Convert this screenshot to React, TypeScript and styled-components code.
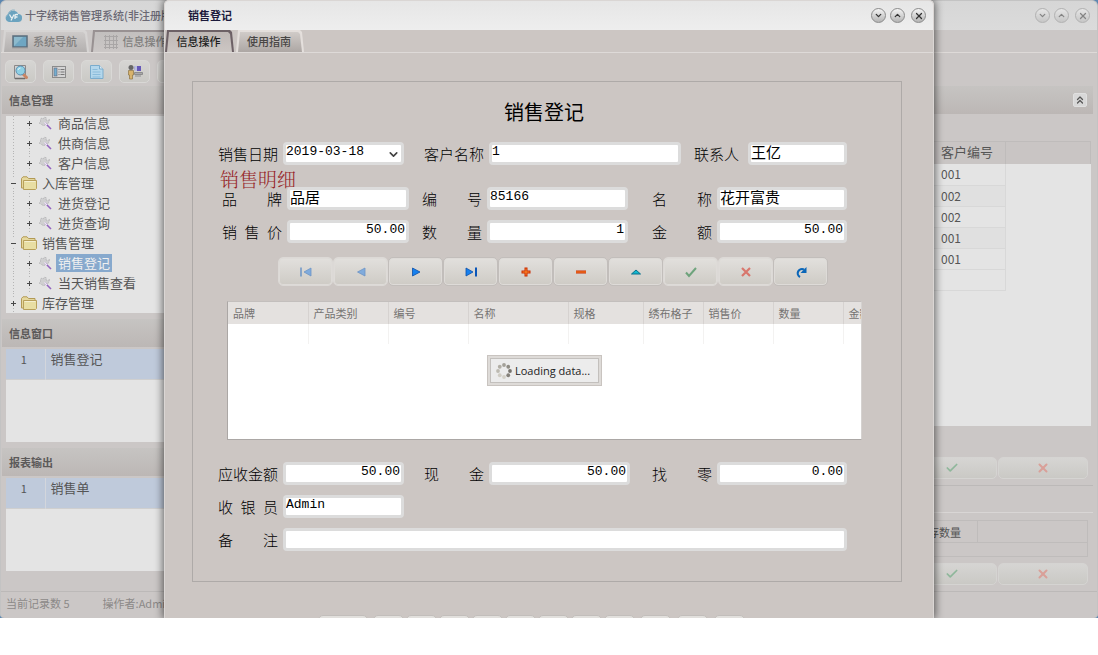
import React from "react";
import styled, { createGlobalStyle, css } from "styled-components";
import { Check, ChevronDown, ChevronsUp, ChevronUp, X } from "lucide-react";

const sans = `"Noto Sans CJK SC", sans-serif`;
const latin = `"Open Sans", "Noto Sans CJK SC", sans-serif`;
const mono = `"Liberation Mono", "Noto Sans CJK SC", monospace`;

const Global = createGlobalStyle`
  * { box-sizing: border-box; }
  body { margin: 0; background: #fff; font-family: ${sans}; font-size: 11px; color: #555; }
  button, input, select { font: inherit; color: inherit; margin: 0; }
  button { padding: 0; }
  ul { list-style: none; margin: 0; padding: 0; }
  h1, h2, h3, p { margin: 0; font-weight: 400; }
  table { border-collapse: collapse; border-spacing: 0; }
  svg { display: block; }
`;

/* ---------- shared window chrome ---------- */

const Desktop = styled.div`
  position: relative;
  height: calc(100vh - 37px);
  background: #5d87b0;
`;

const AppWindow = styled.div`
  height: 100%;
  display: flex;
  flex-direction: column;
  overflow: hidden;
  background: #cbc7c6;
  border: 1px solid #c3c3c3;
  border-width: 1px 1px 0 1px;
  border-radius: 6px 6px 4px 4px;
`;

const TitleBar = styled.header<{ $front?: boolean }>`
  flex: none;
  display: flex;
  align-items: center;
  gap: 3px;
  height: 29px;
  padding: 0 7px 0 ${(p) => (p.$front ? 23 : 4)}px;
  background: ${(p) =>
    p.$front ? "linear-gradient(#e6e6e6, #eeeeee)" : "linear-gradient(#d6d6d6, #dbdbdb)"};
`;

const WindowTitle = styled.h1<{ $front?: boolean }>`
  flex: 1;
  font-size: 11px;
  line-height: 29px;
  font-weight: ${(p) => (p.$front ? 700 : 500)};
  color: ${(p) => (p.$front ? "#1c1a3c" : "#6a6874")};
  white-space: nowrap;
`;

const Controls = styled.div<{ $dim?: boolean }>`
  display: flex;
  gap: 4px;
  opacity: ${(p) => (p.$dim ? 0.5 : 1)};
`;

const RoundButton = styled.button<{ $last?: boolean }>`
  width: 15px;
  height: 15px;
  display: grid;
  place-items: center;
  border: 1px solid #8b8b8b;
  border-radius: 50%;
  background: linear-gradient(#f4f4f4, #b4b4b4);
  color: #333;
  margin-left: ${(p) => (p.$last ? 2 : 0)}px;
`;

const TabStrip = styled.nav<{ $front?: boolean }>`
  flex: none;
  display: flex;
  align-items: flex-end;
  gap: 2px;
  height: 23px;
  padding-left: ${(p) => (p.$front ? 0 : 1)}px;
  border-bottom: 1px solid #dedad8;
`;

const TabButton = styled.button<{ $active?: boolean; $w: number; $dim?: boolean }>`
  position: relative;
  isolation: isolate;
  display: flex;
  align-items: center;
  justify-content: center;
  gap: 5px;
  width: ${(p) => p.$w}px;
  height: 22px;
  border: 0;
  padding: 1px 2px 0 0;
  background: none;
  font-size: 11px;
  font-weight: 500;
  line-height: 21px;
  white-space: nowrap;
  color: ${(p) => (p.$dim ? "#807e7d" : p.$active ? "#1d1d1d" : "#484645")};
  &::before,
  &::after {
    content: "";
    position: absolute;
    z-index: -1;
    clip-path: polygon(2px 0, calc(100% - 4px) 0, calc(100% - 2px) 2px, 100% 100%, 0 100%);
  }
  &::before {
    inset: 0;
    background: ${(p) =>
      p.$active ? (p.$dim ? "#989192" : "#6d6166") : p.$dim ? "#d6d4d3" : "#e4dfdc"};
  }
  &::after {
    inset: 2px 2px 0 2px;
    background: ${(p) =>
      p.$active
        ? p.$dim
          ? "linear-gradient(#c2bfbe, #cbc7c6)"
          : "linear-gradient(#bfb8b6, #ccc6c3)"
        : p.$dim
          ? "linear-gradient(#cdcac9, #b3b0af)"
          : "linear-gradient(#d0cbc8, #ada7a4)"};
  }
`;

const softButton = css`
  border: 1px solid #d9d8d6;
  border-radius: 5px;
  background: linear-gradient(#d6d5d3, #cac9c5);
`;

/* ---------- background window ---------- */

const Toolbar = styled.div`
  flex: none;
  display: flex;
  align-items: center;
  gap: 7px;
  height: 33px;
  padding: 4px 4px 0;
`;

const ToolButton = styled.button`
  ${softButton}
  width: 31px;
  height: 23px;
  display: grid;
  place-items: center;
`;

const Columns = styled.div`
  flex: 1;
  min-height: 0;
  display: flex;
`;

const Sidebar = styled.aside`
  flex: none;
  width: 220px;
  padding-left: 1px;
  border-right: 1px solid #bfbcbb;
`;

const Main = styled.main`
  flex: 1;
  min-width: 0;
  padding-right: 4px;
`;

const PanelHeader = styled.h2`
  display: flex;
  align-items: center;
  justify-content: space-between;
  height: 28px;
  padding: 0 6px 0 7px;
  font-size: 11px;
  font-weight: 700;
  color: #5b5959;
  background: linear-gradient(#c6c4c2, #bcb7b5);
`;

const CollapseButton = styled.button`
  width: 14px;
  height: 14px;
  display: grid;
  place-items: center;
  border: 1px solid #e0e0e0;
  border-radius: 2px;
  background: #d8d8d8;
  color: #555;
`;

const Pane = styled.div<{ $h: number }>`
  height: ${(p) => p.$h}px;
  margin: 2px 0 6px 4px;
  overflow: hidden;
  background: #e4e4e4;
`;

const Tree = styled.ul`
  margin-top: -3px;
`;

const TreeRow = styled.li`
  display: flex;
  align-items: center;
  height: 20px;
`;

const Guide = styled.span<{ $w: number }>`
  flex: none;
  width: ${(p) => p.$w}px;
  height: 20px;
  display: grid;
  place-items: center;
  background: repeating-linear-gradient(#b5b5b5 0 1px, transparent 1px 3px) center / 1px 100% no-repeat;
`;

const Sign = styled.span`
  width: 9px;
  height: 9px;
  background: #e4e4e4;
`;

const TreeText = styled.a<{ $selected?: boolean }>`
  margin-left: 3px;
  padding: 0 2px;
  font-size: 13px;
  line-height: 18px;
  text-decoration: none;
  white-space: nowrap;
  color: ${(p) => (p.$selected ? "#f0f0f0" : "#565656")};
  background: ${(p) => (p.$selected ? "#87a9cd" : "transparent")};
`;

const ListTable = styled.table`
  width: 100%;
  table-layout: fixed;
  tr {
    height: 30px;
    background: #bfcadb;
    border-bottom: 1px solid #cfcfcf;
  }
  td {
    padding: 0 0 9px 5px;
    font-size: 13px;
    line-height: 20px;
  }
  td:first-child {
    width: 39px;
    padding-left: 0;
    padding-right: 3px;
    text-align: center;
    font-size: 11px;
    border-right: 1px solid #d3d6dc;
  }
`;

const StatusBar = styled.footer`
  flex: none;
  display: flex;
  gap: 33px;
  height: 27px;
  padding-left: 5px;
  line-height: 22px;
  color: #8b8988;
  border-top: 1px solid #bcb9b8;
`;

const CustomerPane = styled.div`
  height: 285px;
  margin: 27px 2px 0 0;
  background: #e4e4e4;
`;

const CustomerTable = styled.table`
  width: 100%;
  table-layout: fixed;
  font-size: 12px;
  th {
    height: 22px;
    padding: 0 0 2px 8px;
    text-align: left;
    font-size: 13px;
    font-weight: 400;
    line-height: 20px;
    background: #c9c5c4;
    border: 1px solid #bfbcbb;
    border-bottom: 0;
  }
  td {
    height: 21px;
    padding: 0 0 1px 8px;
    line-height: 19px;
    border: solid #d8d8d8;
    border-width: 0 1px 1px 0;
  }
  td:last-child {
    border: 0;
  }
  tr:nth-child(even):not(:last-child) td:not(:last-child) {
    background: #e0e0e0;
  }
`;

const ActionBar = styled.div<{ $top: number }>`
  display: flex;
  justify-content: flex-end;
  gap: 1px;
  margin-top: ${(p) => p.$top}px;
  padding-right: 5px;
`;

const ActionButton = styled.button`
  ${softButton}
  border-color: #d5d4d2;
  width: 90px;
  height: 22px;
  display: grid;
  place-items: center;
`;

const Divider = styled.hr<{ $light?: boolean; $top: number }>`
  height: 1px;
  margin: ${(p) => p.$top}px 0 0;
  border: 0;
  background: ${(p) => (p.$light ? "#d9d6d5" : "#bcb9b8")};
`;

const StockTable = styled.table`
  width: calc(100% - 5px);
  margin-top: 7px;
  table-layout: fixed;
  th,
  td {
    border: 1px solid #bfbcbb;
    padding: 0 16px 0 0;
  }
  th {
    height: 22px;
    text-align: right;
    font-weight: 400;
    font-size: 11px;
    line-height: 20px;
  }
  td {
    height: 14px;
    border-width: 1px 0;
  }
  td:last-child {
    border-right-width: 1px;
  }
`;

/* ---------- sales dialog ---------- */

const Dialog = styled.section`
  position: absolute;
  inset: 0;
  margin: 0 auto;
  width: 770px;
  max-width: 100%;
  height: 100%;
  overflow: hidden;
  background: #ccc6c3;
  border: 1px solid #dad6d4;
  border-bottom: 0;
  border-radius: 5px 5px 0 0;
`;

const DialogShade = styled.div`
  position: absolute;
  inset: 0;
  margin: 0 auto;
  width: 770px;
  max-width: 100%;
  border-radius: 5px 5px 0 0;
  box-shadow: 0 0 8px 1px rgba(0, 0, 0, 0.6);
`;

const Clip = styled.div`
  position: absolute;
  inset: 0;
  overflow: hidden;
`;

const FormFrame = styled.form`
  margin: 28px 31px 0 27px;
  padding: 15px 0 30px 25px;
  border: 1px solid #aeaaa8;
  color: #000;
`;

const FormTitle = styled.h2`
  margin: 0 31px 15px 0;
  text-align: center;
  font-size: 20px;
  line-height: 30px;
`;

const DetailTitle = styled.h3`
  height: 22px;
  margin-left: 2px;
  font-family: "Noto Serif CJK SC", "Noto Sans CJK SC", serif;
  font-size: 19px;
  font-weight: 300;
  line-height: 28px;
  color: #962427;
`;

const FieldRow = styled.div<{ $cols: string; $top?: number; $indent?: number }>`
  display: grid;
  grid-template-columns: ${(p) => p.$cols};
  column-gap: 13px;
  margin: ${(p) => p.$top ?? 0}px 54px 0 ${(p) => p.$indent ?? 0}px;
`;

const FieldBox = styled.div`
  display: flex;
  align-items: center;
  gap: 5px;
`;

const FieldLabel = styled.label<{ $w: number }>`
  flex: none;
  width: ${(p) => p.$w}px;
  font-size: 15px;
  font-weight: 300;
  line-height: 23px;
  white-space: nowrap;
  text-align-last: ${(p) => (p.$w === 60 ? "justify" : "left")};
`;

const fieldLook = css<{ $w?: number; $right?: boolean; $large?: boolean }>`
  ${(p) => (p.$w ? `width: ${p.$w}px;` : "flex: 1; width: 0;")}
  height: 23px;
  min-width: 0;
  padding: 0 1px 4px 0;
  border: 3px solid #dcdcdc;
  border-radius: 4px;
  outline: 0;
  background: #fff;
  font-family: ${(p) => (p.$large ? sans : mono)};
  font-size: ${(p) => (p.$large ? 15 : 13)}px;
  line-height: 13px;
  text-align: ${(p) => (p.$right ? "right" : "left")};
`;

const TextInput = styled.input`
  ${fieldLook}
`;

const DateWrap = styled.span`
  position: relative;
  display: flex;
  svg {
    position: absolute;
    right: 4px;
    top: 6px;
    pointer-events: none;
  }
`;

const DateSelect = styled.select`
  ${fieldLook}
  appearance: none;
`;

const NavBar = styled.div`
  display: flex;
  margin: 14px 0 15px 60px;
`;

const NavButton = styled.button<{ $off?: boolean }>`
  width: 55px;
  height: 29px;
  display: grid;
  place-items: center;
  border: 1px solid ${(p) => (p.$off ? "#dcd9d6" : "#c2bebb")};
  border-radius: 5px;
  background: linear-gradient(#e2e0dd, #cecbc5);
  box-shadow: inset 0 0 0 1px #dedbd8;
  svg {
    opacity: ${(p) => (p.$off ? 0.55 : 1)};
  }
`;

const GridBox = styled.div`
  position: relative;
  height: 139px;
  margin: 0 39px 22px 9px;
  overflow: hidden;
  background: #fff;
  border: 1px solid #aba7a5;
  border-top-color: #c3bfbd;
  border-right-color: #d5d2d0;
`;

const DetailTable = styled.table`
  width: 100%;
  table-layout: fixed;
  th {
    height: 22px;
    padding: 0 0 0 5px;
    overflow: hidden;
    text-align: left;
    font-size: 11px;
    font-weight: 400;
    line-height: 21px;
    white-space: nowrap;
    color: #757372;
    background: #e4e1df;
    border-right: 1px solid #d6d2d0;
  }
  td {
    height: 20px;
    padding: 0;
    border-right: 1px solid #f3f2f1;
  }
  th:last-child,
  td:last-child {
    border-right: 0;
  }
`;

const LoadingBox = styled.div`
  position: absolute;
  left: 0;
  right: 0;
  top: 53px;
  width: 115px;
  margin: 0 auto;
  padding: 2px;
  border: 1px solid #c9c4c0;
  background: #dedbd8;
`;

const LoadingText = styled.p`
  display: flex;
  align-items: center;
  gap: 3px;
  height: 25px;
  padding-left: 5px;
  border: 1px solid #c3c0bd;
  background: #ececec;
  font-family: ${latin};
  font-size: 11px;
  white-space: nowrap;
  color: #222;
`;

const BottomBar = styled.div`
  display: flex;
  gap: 5px;
  margin: 33px 0 0 153px;
`;

const ButtonGroup = styled.div<{ $gap: number }>`
  display: flex;
  gap: ${(p) => p.$gap}px;
`;

const BottomButton = styled.button<{ $w?: number }>`
  width: ${(p) => p.$w ?? 31}px;
  height: 29px;
  border: 1px solid #c2bebb;
  border-radius: 5px;
  background: #e2e0dd;
`;

/* ---------- drawings ---------- */

const Logo = () => (
  <svg width="17" height="14" viewBox="0 0 17 14">
    <path d="M4 13a4 4 0 0 1-1-7.600A5.500 5.500 0 0 1 13.200 5 4 4 0 0 1 13 13z" fill="#6ba3bf" />
    <path d="M1 8a4 4 0 0 1 2-2.600A5.500 5.500 0 0 1 10 1.200" fill="none" stroke="#8fb4c6" />
    <path d="M4.500 5.500l2 3.500m2.500-3.500L6 11.500M10 10V6.500q0-1 1-1h2M10 8h2.500" fill="none" stroke="#e8f0f2" strokeWidth="1.300" />
  </svg>
);

const MonitorIcon = () => (
  <svg width="16" height="14" viewBox="0 0 16 14">
    <rect x="1" y="1" width="14" height="11" fill="#6fa6c2" stroke="#5b6d7c" strokeWidth="1.500" />
    <path d="M2 11V2h9z" fill="#8dbacd" />
    <path d="M0 13h16" stroke="#a4a09e" />
  </svg>
);

const MeshIcon = () => (
  <svg width="14" height="14" viewBox="0 0 14 14" stroke="#a9a6a6" shapeRendering="crispEdges">
    <path d="M0 1.500h14M0 5.500h14M0 9.500h14M0 12.500h14M1.500 0v14M5.500 0v14M9.500 0v14M12.500 0v14" />
  </svg>
);

const SearchDocIcon = () => (
  <svg width="16" height="16" viewBox="0 0 16 16">
    <path d="M1.500 1.500h11v13h-11z" fill="#d3d1d0" stroke="#8a8888" />
    <path d="M9.500 9.500l4 4" stroke="#c98563" strokeWidth="3" strokeLinecap="round" />
    <circle cx="7.500" cy="6.500" r="4.500" fill="#8fd0e4" stroke="#5c91b3" />
    <path d="M5 6a2.500 2.500 0 0 1 2.500-2" fill="none" stroke="#e9f6fa" />
    <path d="M2 14.500h10" stroke="#6d6b6b" strokeWidth="1.500" />
  </svg>
);

const FormIcon = () => (
  <svg width="14" height="12" viewBox="0 0 14 12">
    <rect x=".5" y=".5" width="13" height="11" fill="#d4d4d4" stroke="#8b8b8b" />
    <rect x="2" y="2" width="3" height="8" fill="#73aed0" stroke="#667" strokeWidth=".6" />
    <path d="M6.500 3.500h1m1 0h4M6.500 6h1m1 0h4M6.500 8.500h1m1 0h4" stroke="#777" />
  </svg>
);

const PageIcon = () => (
  <svg width="14" height="16" viewBox="0 0 14 16">
    <path d="M.5 1.500h9l3.500 3.500v9.500H.5z" fill="#b4d7ec" stroke="#7aaccd" />
    <path d="M9.500 1.500v3.500H13" fill="#dbeaf2" stroke="#7aaccd" />
    <path d="M2.500 5.500h5m-5 2.500h8m-8 2.500h8m-8 2.500h8" stroke="#8bbcdb" />
  </svg>
);

const ClerkIcon = () => (
  <svg width="16" height="16" viewBox="0 0 16 16">
    <path d="M7 2h7v5H8z" fill="#6558b8" />
    <path d="M7 2h3v5H8z" fill="#b9bfe0" />
    <path d="M7.500 8.500h8v2h-8zM8 12h6" fill="#aaa" stroke="#8d8d8d" />
    <circle cx="4" cy="3.500" r="2.500" fill="#666" />
    <path d="M1.500 6.500h5v4.500h-1v4h-3v-4h-1z" fill="#d8b36c" stroke="#8d7443" strokeWidth=".7" />
  </svg>
);

const WandIcon = () => (
  <svg width="16" height="16" viewBox="0 0 16 16">
    <path d="M3.500 4l1.500-1 1 1 1.500-2 2 1-.5 2 1.500 1 2-2-.5 3-1.500 2-2-1-1.500 3-2.500-1.500L2 8l1.500-1.500z" fill="#cfcfd0" stroke="#aeaeb0" strokeWidth=".7" strokeDasharray="2 1" />
    <path d="M8 8l6 6" stroke="#9465bf" strokeWidth="1.600" />
    <path d="M7.500 7.500l2.500 2.500" stroke="#efeaf4" strokeWidth="1.300" />
  </svg>
);

const FolderIcon = () => (
  <svg width="16" height="14" viewBox="0 0 16 14">
    <path d="M.5 12V2.500L2 .8h4l1.500 1.700H14v9.500z" fill="#e5d79d" stroke="#b29a55" />
    <path d="M2.500 4.500h13v8l-1 1H2.500z" fill="#e8dea3" stroke="#b8a05b" />
    <path d="M3.500 5.500h11" stroke="#f4efcf" />
  </svg>
);

const SignIcon = ({ open }: { open: boolean }) => (
  <svg width="9" height="9" viewBox="0 0 9 9" stroke="#484848">
    <path d={open ? "M2 4.500h5" : "M2 4.500h5M4.500 2v5"} />
  </svg>
);

const Spinner = () => {
  const shades = ["#77736c", "#86827b", "#d3d0c7", "#d0cdc4", "#bdbab1", "#b0ada4", "#a3a098", "#8f8c84"];
  return (
    <svg width="16" height="16" viewBox="-8 -8 16 16">
      {shades.map((fill, i) => (
        <circle key={i} r="1.900" cx={6 * Math.cos((i * Math.PI) / 4)} cy={6 * Math.sin((i * Math.PI) / 4)} fill={fill} />
      ))}
    </svg>
  );
};

const navIcons: { name: string; off?: boolean; art: React.ReactNode }[] = [
  { name: "第一条", off: true, art: <><path d="M1 1.500v9" stroke="#1560bd" strokeWidth="1.500" /><path d="M11 2v8L4 6z" fill="#3a8ae6" stroke="#1560bd" strokeWidth=".8" /></> },
  { name: "上一条", off: true, art: <path d="M10 2v8L2.500 6z" fill="#3a8ae6" stroke="#1560bd" strokeWidth=".8" /> },
  { name: "下一条", art: <path d="M2.500 2v8L10 6z" fill="#1680ee" stroke="#0b4fa8" strokeWidth=".8" /> },
  { name: "最后一条", art: <><path d="M11 1.500v9" stroke="#0b56b8" strokeWidth="2" /><path d="M1 2v8l7-4z" fill="#1680ee" stroke="#0b4fa8" strokeWidth=".8" /></> },
  { name: "添加", art: <><path d="M6 1.500v9M1.500 6h9" stroke="#c92b00" strokeWidth="3" /><path d="M6 2.500v7M2.500 6h7" stroke="#ff8a2a" /></> },
  { name: "删除", art: <><path d="M1 6h10" stroke="#c92b00" strokeWidth="3" /><path d="M1 6h10" stroke="#ff8a2a" /></> },
  { name: "编辑", art: <path d="M1.500 8L6 4l4.500 4z" fill="#12b8cf" stroke="#08718c" /> },
  { name: "保存", off: true, art: <path d="M1 6.500l3 3.500 7-8" fill="none" stroke="#197c38" strokeWidth="2" /> },
  { name: "取消", off: true, art: <path d="M2 2l8 8M10 2l-8 8" stroke="#d92a1c" strokeWidth="2.200" /> },
  { name: "刷新", art: <><path d="M5 11A4 4 0 1 1 9 3.500" fill="none" stroke="#0a66b8" strokeWidth="2.200" /><path d="M11.500 1v6H5.500z" fill="#0a66b8" /></> },
];

/* ---------- pieces ---------- */

const WindowControls = ({ dim }: { dim?: boolean }) => (
  <Controls $dim={dim}>
    <RoundButton aria-label="最小化"><ChevronDown size={9} strokeWidth={3.5} /></RoundButton>
    <RoundButton aria-label="最大化"><ChevronUp size={9} strokeWidth={3.5} /></RoundButton>
    <RoundButton aria-label="关闭" $last><X size={10} strokeWidth={3} /></RoundButton>
  </Controls>
);

type FieldProps = { id: string; label: string; value: string; w?: number; labelWidth?: number; right?: boolean; large?: boolean };

const Field = ({ id, label, value, w, labelWidth = 60, right, large }: FieldProps) => (
  <FieldBox>
    <FieldLabel htmlFor={id} $w={labelWidth}>{label}</FieldLabel>
    <TextInput id={id} defaultValue={value} $w={w} $right={right} $large={large} />
  </FieldBox>
);

const tree: { text: string; level: 1 | 2; open?: boolean; selected?: boolean }[] = [
  { text: "商品信息", level: 2 },
  { text: "供商信息", level: 2 },
  { text: "客户信息", level: 2 },
  { text: "入库管理", level: 1, open: true },
  { text: "进货登记", level: 2 },
  { text: "进货查询", level: 2 },
  { text: "销售管理", level: 1, open: true },
  { text: "销售登记", level: 2, selected: true },
  { text: "当天销售查看", level: 2 },
  { text: "库存管理", level: 1 },
];

const detailColumns: [string, number | undefined][] = [
  ["品牌", 80], ["产品类别", 80], ["编号", 80], ["名称", 100], ["规格", 75],
  ["绣布格子", 60], ["销售价", 70], ["数量", 70], ["金额", undefined],
];

const ConfirmButtons = ({ top }: { top: number }) => (
  <ActionBar $top={top}>
    <ActionButton aria-label="保存"><Check size={14} strokeWidth={3} color="#8fb79b" /></ActionButton>
    <ActionButton aria-label="取消"><X size={14} strokeWidth={3.5} color="#d9a099" /></ActionButton>
  </ActionBar>
);

const IndexList = ({ text }: { text: string }) => (
  <ListTable><tbody><tr><td>1</td><td>{text}</td></tr></tbody></ListTable>
);

function MainWindow() {
  return (
    <AppWindow>
      <TitleBar>
        <Logo />
        <WindowTitle>十字绣销售管理系统(非注册版)</WindowTitle>
        <WindowControls dim />
      </TitleBar>
      <TabStrip>
        <TabButton $w={87} $dim><MonitorIcon />系统导航</TabButton>
        <TabButton $w={90} $dim $active><MeshIcon />信息操作</TabButton>
      </TabStrip>
      <Toolbar>
        <ToolButton aria-label="查找"><SearchDocIcon /></ToolButton>
        <ToolButton aria-label="表单"><FormIcon /></ToolButton>
        <ToolButton aria-label="文档"><PageIcon /></ToolButton>
        <ToolButton aria-label="操作员"><ClerkIcon /></ToolButton>
        <ToolButton aria-label="窗口"><FormIcon /></ToolButton>
      </Toolbar>
      <Columns>
        <Sidebar>
          <PanelHeader>信息管理</PanelHeader>
          <Pane $h={197}>
            <Tree>
              {tree.map((n) => (
                <TreeRow key={n.text}>
                  <Guide $w={15}>{n.level === 1 && <Sign><SignIcon open={!!n.open} /></Sign>}</Guide>
                  {n.level === 2 && <Guide $w={16}><Sign><SignIcon open={false} /></Sign></Guide>}
                  {n.level === 1 ? <FolderIcon /> : <WandIcon />}
                  <TreeText href="#" $selected={n.selected}>{n.text}</TreeText>
                </TreeRow>
              ))}
            </Tree>
          </Pane>
          <PanelHeader>信息窗口</PanelHeader>
          <Pane $h={93}><IndexList text="销售登记" /></Pane>
          <PanelHeader>报表输出</PanelHeader>
          <Pane $h={93}><IndexList text="销售单" /></Pane>
        </Sidebar>
        <Main>
          <PanelHeader as="div">
            <span />
            <CollapseButton aria-label="折叠"><ChevronsUp size={12} strokeWidth={2.5} /></CollapseButton>
          </PanelHeader>
          <CustomerPane>
            <CustomerTable>
              <colgroup><col /><col width="73" /><col width="85" /></colgroup>
              <thead><tr><th /><th>客户编号</th><th /></tr></thead>
              <tbody>
                {["001", "002", "002", "001", "001", ""].map((v, i) => (
                  <tr key={i}><td /><td>{v}</td><td /></tr>
                ))}
              </tbody>
            </CustomerTable>
          </CustomerPane>
          <ConfirmButtons top={31} />
          <Divider $top={6} />
          <Divider $top={26} $light />
          <StockTable>
            <colgroup><col /><col width="110" /></colgroup>
            <thead><tr><th>库存数量</th><th /></tr></thead>
            <tbody><tr><td /><td /></tr></tbody>
          </StockTable>
          <ConfirmButtons top={6} />
        </Main>
      </Columns>
      <StatusBar><span>当前记录数 5</span><span>操作者:Admin</span></StatusBar>
    </AppWindow>
  );
}

function SalesDialog() {
  return (
    <Dialog>
      <TitleBar $front>
        <WindowTitle $front as="h2">销售登记</WindowTitle>
        <WindowControls />
      </TitleBar>
      <TabStrip $front>
        <TabButton $w={69} $active>信息操作</TabButton>
        <TabButton $w={68}>使用指南</TabButton>
      </TabStrip>
      <FormFrame onSubmit={(e) => e.preventDefault()}>
        <FormTitle>销售登记</FormTitle>
        <FieldRow $cols="193px 257px 1fr">
          <FieldBox>
            <FieldLabel htmlFor="date" $w={60}>销售日期</FieldLabel>
            <DateWrap>
              <DateSelect id="date" $w={121}><option>2019-03-18</option></DateSelect>
              <ChevronDown size={13} strokeWidth={3} color="#444" />
            </DateWrap>
          </FieldBox>
          <Field id="customer" label="客户名称" value="1" />
          <Field id="contact" label="联系人" value="王亿" labelWidth={49} large />
        </FieldRow>
        <DetailTitle>销售明细</DetailTitle>
        <FieldRow $cols="187px 217px 1fr" $indent={4}>
          <Field id="brand" label="品 牌" value="品居" large />
          <Field id="code" label="编 号" value="85166" w={141} />
          <Field id="name" label="名 称" value="花开富贵" large />
        </FieldRow>
        <FieldRow $cols="187px 217px 1fr" $indent={4} $top={10}>
          <Field id="price" label="销 售 价" value="50.00" right />
          <Field id="count" label="数 量" value="1" w={141} right />
          <Field id="amount" label="金 额" value="50.00" right />
        </FieldRow>
        <NavBar>
          {navIcons.map((n) => (
            <NavButton key={n.name} type="button" aria-label={n.name} $off={n.off}>
              <svg width="12" height="12" viewBox="0 0 12 12">{n.art}</svg>
            </NavButton>
          ))}
        </NavBar>
        <GridBox>
          <DetailTable>
            <colgroup>{detailColumns.map(([name, w]) => <col key={name} width={w} />)}</colgroup>
            <thead><tr>{detailColumns.map(([name]) => <th key={name}>{name}</th>)}</tr></thead>
            <tbody><tr>{detailColumns.map(([name]) => <td key={name} />)}</tr></tbody>
          </DetailTable>
          <LoadingBox role="status"><LoadingText><Spinner />Loading data...</LoadingText></LoadingBox>
        </GridBox>
        <FieldRow $cols="193px 215px 1fr">
          <Field id="due" label="应收金额" value="50.00" w={121} right />
          <Field id="cash" label="现 金" value="50.00" w={141} right />
          <Field id="change" label="找 零" value="0.00" right />
        </FieldRow>
        <FieldRow $cols="193px" $top={10}>
          <Field id="cashier" label="收 银 员" value="Admin" w={121} />
        </FieldRow>
        <FieldRow $cols="1fr" $top={10}>
          <Field id="remark" label="备 注" value="" />
        </FieldRow>
      </FormFrame>
      <BottomBar>
        <BottomButton $w={50} aria-label="打印" />
        <ButtonGroup $gap={2}>
          {["首条", "前页", "前条", "后条", "后页", "末条", "新增", "移除"].map((n) => <BottomButton key={n} aria-label={n} />)}
        </ButtonGroup>
        <ButtonGroup $gap={6}>
          {["修改", "确认", "放弃"].map((n) => <BottomButton key={n} aria-label={n} />)}
        </ButtonGroup>
      </BottomBar>
    </Dialog>
  );
}

export default function App() {
  return (
    <>
      <Global />
      <Desktop>
        <MainWindow />
        <Clip>
          <DialogShade />
          <SalesDialog />
        </Clip>
      </Desktop>
    </>
  );
}
